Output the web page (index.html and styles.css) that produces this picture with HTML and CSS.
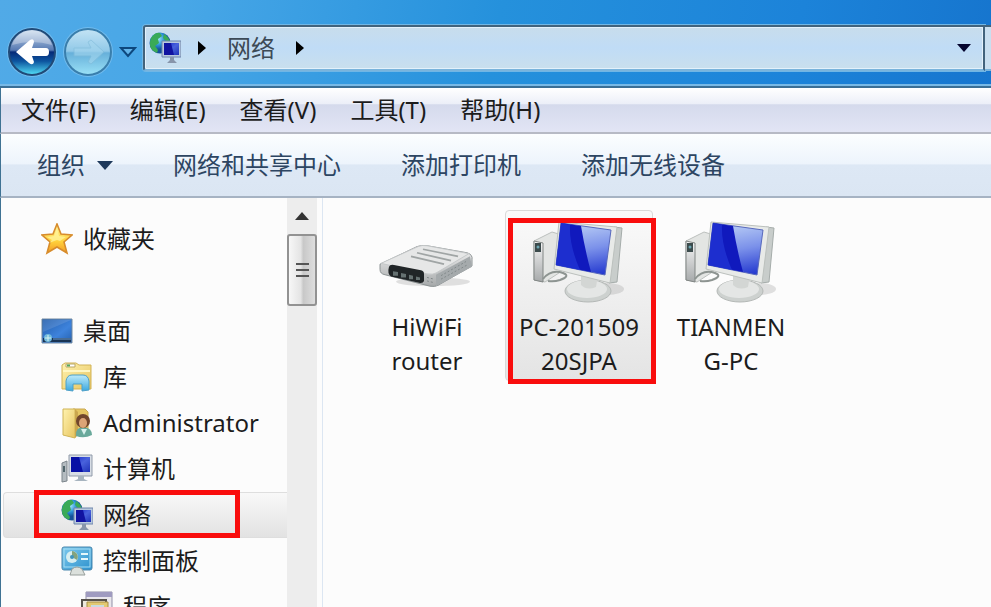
FILE: index.html
```html
<!DOCTYPE html>
<html lang="zh-CN">
<head>
  <meta charset="UTF-8">
  <meta name="viewport" content="width=device-width, initial-scale=1.0">
  <title>网络</title>
  <link rel="stylesheet" href="styles.css">
</head>
<body>
<header class="titlebar">
  <div class="history">
    <button class="round" aria-label="后退">
      <svg width="54" height="54" viewBox="0 0 54 54">
        <circle cx="27" cy="27" r="25" fill="#8bcaf3" opacity=".6"/>
        <circle cx="27" cy="27" r="23" fill="url(#back)" stroke="#204a78" stroke-width="2"/>
        <path d="M7 20A21 21 0 0 1 47 20Q27 14 7 20z" fill="#fff" opacity=".3"/>
        <path d="M11 27L25 15Q29 13 29 17L27 23H41Q44 23 44 27Q44 31 41 31H27L29 37Q28 41 24 38z" fill="#fff"/>
      </svg>
    </button>
    <button class="round" aria-label="前进">
      <svg width="54" height="54" viewBox="0 0 54 54">
        <circle cx="27" cy="27" r="25" fill="#8bcaf3" opacity=".6"/>
        <circle cx="27" cy="27" r="23" fill="url(#forward)" stroke="#397eac" stroke-width="2"/>
        <path d="M43 27L30 15L27 17L30 23H13V31H30L27 37L30 39z" fill="#a4d6ee" stroke="#82bddb" opacity=".6"/>
      </svg>
    </button>
    <button class="recent" aria-label="最近浏览的位置">
      <svg width="18" height="14" viewBox="0 0 18 14"><path d="M2 3H16L9 11z" fill="#62b4ea" stroke="#0d477d" stroke-width="2"/></svg>
    </button>
  </div>
  <nav class="address" aria-label="地址">
    <svg class="icon" viewBox="0 0 32 32"><use href="#network"/></svg>
    <svg class="arrow" viewBox="0 0 10 14"><path d="M1 0L9 7L1 14z"/></svg>
    <a class="crumb" href="#">网络</a>
    <svg class="arrow" viewBox="0 0 10 14"><path d="M1 0L9 7L1 14z"/></svg>
    <button class="drop" aria-label="以前的位置"><svg width="14" height="8" viewBox="0 0 14 8"><path d="M0 0H14L7 8z" fill="#05052e"/></svg></button>
  </nav>
  <div class="refresh"></div>
</header>

<nav class="menubar" aria-label="菜单">
  <button>文件(F)</button>
  <button>编辑(E)</button>
  <button>查看(V)</button>
  <button>工具(T)</button>
  <button>帮助(H)</button>
</nav>

<div class="toolbar">
  <button>组织 <svg width="16" height="9" viewBox="0 0 16 9"><path d="M0 0H16L8 9z" fill="#1e395b"/></svg></button>
  <button>网络和共享中心</button>
  <button>添加打印机</button>
  <button>添加无线设备</button>
</div>

<div class="content">
  <aside class="sidebar">
    <ul class="tree">
      <li class="row favorites">
        <svg class="icon" viewBox="0 0 32 32">
          <path d="M16 1L20 11L31 12L23 19L26 30L16 24L6 30L9 19L1 12L12 11z" fill="url(#star)" stroke="#d78c2c" stroke-width="1.6"/>
          <path d="M16 5L18 13L25 14L19 18L16 17L8 20L11 17L6 14L13 13z" fill="#fff7a3" opacity=".7"/>
        </svg>
        <a href="#">收藏夹</a>
      </li>
      <li class="row">
        <svg class="icon" viewBox="0 0 32 32">
          <path d="M1 4H31V28H1z" fill="url(#desk)" stroke="#72899f"/>
          <path d="M2 23H30V27H2z" fill="#193454"/>
          <path d="M12 24H30" stroke="#78a4d2"/>
          <circle cx="7" cy="23" r="4" fill="#71b9dc"/><path d="M4 23H10M7 20V26" stroke="#d6f3ef"/>
          <path d="M2 5H30L2 17z" fill="#fff" opacity=".12"/>
        </svg>
        <a href="#">桌面</a>
      </li>
      <li class="row child">
        <svg class="icon" viewBox="0 0 32 32">
          <path d="M1 4L4 2H15L18 4H30V28H1z" fill="url(#folder)" stroke="#d2b357"/>
          <path d="M5 3H14V6H5z" fill="#fff" stroke="#baa769"/><path d="M6 4.500H9" stroke="#56a85a" stroke-width="2"/>
          <path d="M2 10H29" stroke="#fff7c3" stroke-width="2"/>
          <path d="M5 29V20Q6 14 11 14H22Q27 14 28 20V29L21 30V23H12V30z" fill="url(#glass)" stroke="#4da0c8"/>
        </svg>
        <a href="#">库</a>
      </li>
      <li class="row child">
        <svg class="icon" viewBox="0 0 32 32">
          <path d="M12 2H24L27 5V28H12z" fill="#e6c663" stroke="#caa953"/>
          <path d="M2 2H14V31L2 28z" fill="url(#folder)" stroke="#d0b456"/>
          <path d="M14 2L17 5V28L14 31z" fill="#cba74e"/>
          <path d="M15 29Q14 20 23 20Q31 21 31 28Q23 32 15 29z" fill="#69a99b"/>
          <circle cx="22" cy="14" r="7" fill="#71462c"/><ellipse cx="22" cy="16" rx="4" ry="5" fill="#dca476"/>
          <path d="M20 22L23 28L26 22" fill="#d8f0ec"/>
        </svg>
        <a href="#">Administrator</a>
      </li>
      <li class="row child">
        <svg class="icon" viewBox="0 0 32 32">
          <path d="M1 10L6 8V28L1 29z" fill="#b5bcc1" stroke="#7c858c"/><path d="M3 13V19" stroke="#51656c" stroke-width="2"/>
          <path d="M8 2H31V23H8z" fill="#d7dde5" stroke="#919ba9"/>
          <path d="M10 4H29V19H10z" fill="url(#screen)"/><path d="M10 4H18L22 19H10z" fill="#0710a5"/>
          <path d="M17 23H23V26L27 28H13L17 26z" fill="#a7b4bf"/>
        </svg>
        <a href="#">计算机</a>
      </li>
      <li class="row child selected">
        <svg class="icon" viewBox="0 0 32 32"><use href="#network"/></svg>
        <a href="#">网络</a>
        <span class="mark"></span>
      </li>
      <li class="row child">
        <svg class="icon" viewBox="0 0 32 32">
          <rect x="1" y="2" width="30" height="23" rx="2" fill="url(#panel)" stroke="#4b87ad"/>
          <rect x="3" y="4" width="26" height="18" fill="none" stroke="#a5def4"/>
          <circle cx="11" cy="12" r="6" fill="#d5edf0"/><path d="M11 12V6A6 6 0 0 1 16 15z" fill="#84a37e"/><circle cx="11" cy="12" r="2" fill="#3f94bd"/>
          <path d="M20 9H27M20 14H27" stroke="#e4f7fb" stroke-width="2"/>
          <path d="M11 24Q16 20 21 24L24 30H9z" fill="#dbe0dc" stroke="#969e9b"/>
        </svg>
        <a href="#">控制面板</a>
      </li>
      <li class="row grandchild">
        <svg class="icon" viewBox="0 0 32 32">
          <path d="M5 1H31V22H5z" fill="#e9e7ec" stroke="#918fa7"/><path d="M5 1H31V6H5z" fill="#9f9bc0"/>
          <path d="M1 9H25V29H1z" fill="#eeeade" stroke="#56524b" stroke-width="2"/>
          <path d="M6 11H27V28H6z" fill="#e3ca73" stroke="#a88d45"/><path d="M10 14H23V25H10z" fill="#c9dbe2"/>
        </svg>
        <a href="#">程序</a>
      </li>
    </ul>
    <div class="scrollbar">
      <button class="up" aria-label="向上滚动"><svg width="14" height="8" viewBox="0 0 14 8"><path d="M0 8L7 0L14 8z" fill="#333"/></svg></button>
      <div class="thumb"><i></i><i></i><i></i></div>
    </div>
  </aside>

  <main class="files">
    <a class="file" href="#">
      <svg class="picture" viewBox="0 0 96 84">
        <g transform="translate(0 8) scale(1 .88)">
          <ellipse cx="54" cy="60" rx="37" ry="5" fill="#aaa" opacity=".35"/>
          <path d="M1 40L38 20Q42 18 48 19L88 27Q94 29 93 35V42L59 64Q56 66 51 65L6 52Q1 51 1 46z" fill="url(#metal)" stroke="#888e8f"/>
          <path d="M2 39L39 20Q43 18 48 19L90 28L57 50Q54 52 48 51z" fill="#e6e7e7" stroke="#c3c6c7"/>
          <path d="M91 31L57 52V65L93 43z" fill="#a5aaac"/>
          <path d="M44 23L79 31M38 27L72 36M32 31L65 40" stroke="#a0a5a5" stroke-width="2"/>
          <path d="M10 43Q11 40 15 41L42 47Q45 48 45 51V59Q44 62 40 61L12 54Q8 51 10 43z" fill="#202527"/>
          <path d="M14 48L19 49V53H14zM22 50L27 51V55H22zM30 52L34 53V57H30zM37 54L41 55V58H37z" fill="#657171"/>
          <path d="M48 55L55 57M48 59L55 61M62 53L87 37M62 57L88 41" stroke="#7f8687" stroke-dasharray="2 2"/>
        </g>
      </svg>
      <span>HiWiFi<br>router</span>
    </a>
    <a class="file selected" href="#">
      <svg class="picture" viewBox="0 0 96 84"><use href="#computer"/></svg>
      <span>PC-201509<br>20SJPA</span>
      <span class="mark"></span>
    </a>
    <a class="file" href="#">
      <svg class="picture" viewBox="0 0 96 84"><use href="#computer"/></svg>
      <span>TIANMEN<br>G-PC</span>
    </a>
  </main>
</div>

<!-- shared icons and gradients -->
<svg class="sprites" width="0" height="0" aria-hidden="true">
  <defs>
    <linearGradient id="back" x2="0" y2="1"><stop stop-color="#cddff0"/><stop offset=".46" stop-color="#5679b2"/><stop offset=".5" stop-color="#052a78"/><stop offset=".7" stop-color="#0d559f"/><stop offset="1" stop-color="#55e2fa"/></linearGradient>
    <linearGradient id="forward" x2="0" y2="1"><stop stop-color="#c4e4f5"/><stop offset=".48" stop-color="#91c9e8"/><stop offset=".52" stop-color="#67b0da"/><stop offset="1" stop-color="#9be2f7"/></linearGradient>
    <linearGradient id="star" x2="0" y2="1"><stop stop-color="#fff5a0"/><stop offset=".6" stop-color="#ffd13b"/><stop offset="1" stop-color="#f39a25"/></linearGradient>
    <linearGradient id="desk" x2="1" y2="1"><stop stop-color="#205ba9"/><stop offset=".6" stop-color="#3e83dc"/><stop offset="1" stop-color="#2460ae"/></linearGradient>
    <linearGradient id="folder" x2="1" y2="1"><stop stop-color="#fff3b0"/><stop offset="1" stop-color="#e7c45f"/></linearGradient>
    <linearGradient id="glass" x2="0" y2="1"><stop stop-color="#bdeafa"/><stop offset="1" stop-color="#3ba8df"/></linearGradient>
    <linearGradient id="panel" x2="1" y2="1"><stop stop-color="#7cc9ed"/><stop offset="1" stop-color="#2d91cd"/></linearGradient>
    <linearGradient id="screen" x2="1" y2="1"><stop stop-color="#1325c9"/><stop offset=".5" stop-color="#4962dc"/><stop offset="1" stop-color="#1e32b8"/></linearGradient>
    <linearGradient id="shine" x1=".5" x2=".7" y2="1"><stop stop-color="#b9cdf5"/><stop offset=".5" stop-color="#7b91ea"/><stop offset="1" stop-color="#263bd0"/></linearGradient>
    <linearGradient id="metal" x2="0" y2="1"><stop stop-color="#f6f6f6"/><stop offset="1" stop-color="#a6a9aa"/></linearGradient>
    <radialGradient id="globe" cx=".4" cy=".3"><stop stop-color="#a9ecff"/><stop offset=".6" stop-color="#2b91d7"/><stop offset="1" stop-color="#15519b"/></radialGradient>
  </defs>
  <symbol id="network" viewBox="0 0 32 32">
    <circle cx="11" cy="11" r="10.500" fill="url(#globe)"/>
    <path d="M2 6Q6 0 11 1L13 4L9 7L10 11L6 14L9 18L8 21Q0 18 1 10zM15 2Q20 5 21 10L17 9L14 6z" fill="#3aaa57"/>
    <path d="M13 9H32V25H13z" fill="#b9c9dd" stroke="#6e86ac"/>
    <path d="M15 11H30V23H15z" fill="url(#screen)"/><path d="M15 11H22L25 23H15z" fill="#1113a1"/>
    <path d="M21 25H25V28L28 31H18L21 28z" fill="#8795aa"/>
  </symbol>
  <symbol id="computer" viewBox="0 0 96 84">
    <ellipse cx="76" cy="68" rx="17" ry="6" fill="#aaa" opacity=".35"/>
    <path d="M3 20L21 11L31 14V50L14 61L3 59z" fill="#e3e5e3" stroke="#bcc0be"/>
    <path d="M3 20L12 22V61L3 59z" fill="url(#metal)" stroke="#818684"/>
    <path d="M4 22H10V31H4z" fill="#3c4b4c"/><circle cx="7" cy="26" r="1.500" fill="#6ba6b2"/>
    <path d="M12 58Q20 48 32 52Q40 55 29 59Q23 61 17 60" fill="none" stroke="#8d9491" stroke-width="2"/>
    <ellipse cx="57" cy="70" rx="23" ry="11" fill="#cdd1cf" stroke="#b5b9b7"/>
    <ellipse cx="56" cy="68" rx="20" ry="9" fill="#e4e6e5"/>
    <path d="M50 50L67 54L65 66Q56 70 50 64z" fill="#d3d6d4"/>
    <path d="M83 6L91 7L86 61L78 62z" fill="#c8cdcb" stroke="#a5acaa"/>
    <path d="M28 1L86 6L79 62L23 48z" fill="#e8eae8" stroke="#bbc0bd"/>
    <path d="M30 2L80 9L74 54L25 44z" fill="url(#shine)" stroke="#5869bd"/>
    <path d="M30 2L50 5Q54 29 60 51L25 44z" fill="#1019bd"/>
    <path d="M30 2L39 4Q38 24 49 49L25 44z" fill="#253bd8" opacity=".65"/>
  </symbol>
</svg>
</body>
</html>
```

FILE: styles.css
```css
* {
  box-sizing: border-box;
}
body {
  margin: 0;
  height: 100vh;
  overflow: hidden;
  display: flex;
  flex-direction: column;
  font-family: "Noto Sans", "Noto Sans CJK SC", sans-serif;
  font-size: 24px;
  line-height: 34px;
  color: #1c1c1c;
  background: #fcfcfc;
}
button {
  margin: 0;
  padding: 0;
  border: 0;
  background: none;
  font: inherit;
  color: inherit;
}
a {
  color: inherit;
  text-decoration: none;
}
svg {
  display: block;
  flex: none;
}
.icon {
  width: 32px;
  height: 32px;
}

/* title bar */
.titlebar {
  flex: none;
  display: flex;
  align-items: flex-start;
  height: 88px;
  padding-top: 25px;
  background: linear-gradient(100deg, #51aae7 0%, #48a7e7 18%, #2591dc 50%, #1c83d9 80%, #1675ce 100%);
  border-bottom: 2px solid #3a6f96;
  box-shadow: inset 0 -2px #78b9e6;
}
.history {
  display: flex;
  align-items: center;
  gap: 2px;
  padding: 0 6px 0 5px;
}
.recent {
  padding-left: 2px;
}
.address {
  flex: 1;
  display: flex;
  align-items: center;
  height: 46px;
  padding: 0 12px 0 4px;
  border: 2px solid #42637c;
  border-bottom-color: #7ab4dc;
  border-radius: 3px 0 0 3px;
  background: linear-gradient(#c8ddec, #c0dcf6 50%, #c9dfed);
  box-shadow: inset 0 0 0 1px #e3f1fb, 0 0 0 1px #70b6e5;
  color: #3d4a56;
}
.arrow {
  width: 10px;
  height: 14px;
  margin: 0 16px;
}
.crumb {
  padding: 0 4px;
}
.drop {
  margin-left: auto;
}
.refresh {
  width: 6px;
  height: 46px;
  border-top: 2px solid #42637c;
  border-bottom: 2px solid #7ab4dc;
  background: #c9dff0;
}

/* menu and toolbar */
.menubar {
  flex: none;
  display: flex;
  align-items: center;
  gap: 34px;
  height: 46px;
  padding: 0 20px;
  border-left: 1px solid #3f7293;
  border-bottom: 2px solid #b7bac5;
  background: linear-gradient(#fff, #eceff8 36%, #d5daec 38%, #e2e5f5);
}
.toolbar {
  flex: none;
  display: flex;
  align-items: center;
  gap: 60px;
  height: 64px;
  padding: 0 36px;
  border-left: 1px solid #3f7293;
  border-bottom: 2px solid #a6b3c3;
  background: linear-gradient(#fcfeff, #edf4fc 48%, #dde8f5 50%, #dbe6f3);
  color: #2d4562;
}
.toolbar button {
  display: flex;
  align-items: center;
  gap: 12px;
}

/* content */
.content {
  flex: 1;
  min-height: 0;
  display: flex;
  border-left: 1px solid #3f7293;
}
.sidebar {
  flex: none;
  display: flex;
  width: 322px;
  padding-right: 5px;
  border-right: 1px solid #dce6f2;
}
.tree {
  flex: 1;
  margin: 0;
  padding: 18px 0 0 2px;
  list-style: none;
}
.row {
  position: relative;
  display: flex;
  align-items: center;
  gap: 10px;
  height: 46px;
  padding-left: 38px;
}
.row.favorites {
  margin-bottom: 46px;
}
.row.child {
  padding-left: 58px;
}
.row.grandchild {
  padding-left: 78px;
}
.row.selected {
  border: 1px solid #dedede;
  border-right: 0;
  border-radius: 4px 0 0 4px;
  padding-left: 57px;
  background: linear-gradient(#f8f8f8, #e2e2e2);
}
.mark {
  position: absolute;
  border: 5px solid #f90d0d;
}
.row .mark {
  left: 30px;
  top: -3px;
  width: 206px;
  height: 48px;
}
.scrollbar {
  width: 30px;
  background: #ededed;
}
.up {
  display: flex;
  justify-content: center;
  align-items: center;
  width: 100%;
  height: 36px;
}
.thumb {
  display: flex;
  flex-direction: column;
  align-items: center;
  justify-content: center;
  gap: 4px;
  height: 72px;
  border: 2px solid #929292;
  border-radius: 3px;
  background: linear-gradient(to right, #f7f7f7, #e4e4e4 45%, #c8c8c8 55%, #dedede);
}
.thumb i {
  width: 13px;
  height: 2px;
  background: #555;
}
.files {
  flex: 1;
  display: flex;
  align-items: flex-start;
  gap: 4px;
  padding: 12px 30px;
}
.file {
  position: relative;
  display: flex;
  flex-direction: column;
  align-items: center;
  gap: 5px;
  width: 148px;
  padding: 10px 0 2px;
  border: 1px solid transparent;
  border-radius: 4px;
  text-align: center;
}
.file.selected {
  border-color: #d9d9d9;
  background: linear-gradient(#fafafa, #e4e4e4);
}
.picture {
  width: 96px;
  height: 84px;
}
.file .mark {
  left: 2px;
  top: 7px;
  width: 148px;
  height: 166px;
}
```
